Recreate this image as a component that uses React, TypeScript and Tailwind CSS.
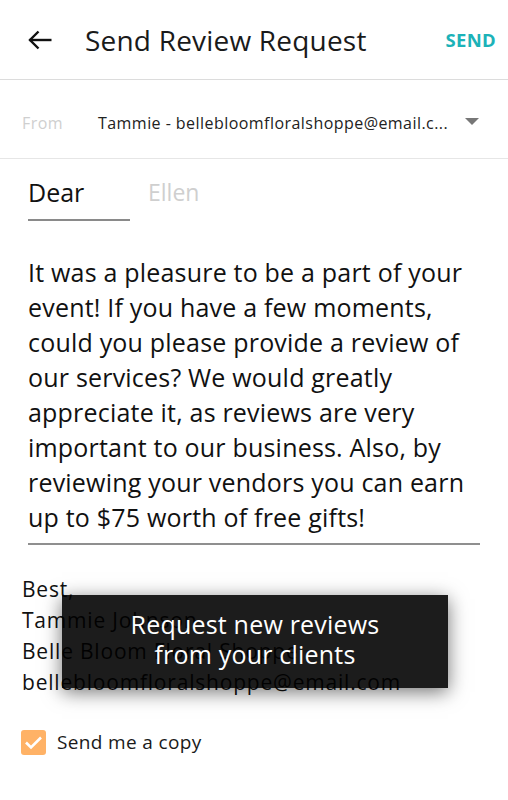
import React from "react";

export default function App() {
  return (
    <div
      className="relative w-[508px] h-[800px] bg-white overflow-hidden text-[#1a1a1a]"
      style={{ fontFamily: '"Open Sans", "Noto Sans", sans-serif' }}
    >
      {/* Header */}
      <div className="h-[80px] border-b border-[#dcdcdc] flex items-center">
        <div className="w-[85px] pl-[27px] flex items-center">
          <svg width="26" height="20" viewBox="0 0 26 20" fill="none">
            <path d="M2.5 10H24.5" stroke="#111" strokeWidth="2.4" />
            <path d="M11.5 1.5L3 10L11.5 18.5" stroke="#111" strokeWidth="2.4" />
          </svg>
        </div>
        <div className="text-[28px] leading-[36px] tracking-[0.2px] text-[#1a1a1a] mt-[1px]">Send Review Request</div>
        <div className="ml-auto pr-[12px] text-[18.5px] font-bold text-[#1cb2b8] tracking-[0.3px]">SEND</div>
      </div>

      {/* From row */}
      <div className="h-[79px] border-b border-[#e6e6e6] flex items-center pl-[22px] pr-[29px] pt-[8px]">
        <div className="w-[76px] text-[16px] tracking-[0.45px] text-[#cfcfcf]">From</div>
        <div className="text-[16px] tracking-[0.45px] text-[#222]">Tammie - bellebloomfloralshoppe@email.c...</div>
        <div className="ml-auto -mt-[4px]">
          <svg width="14" height="7" viewBox="0 0 14 7">
            <path d="M0 0H14L7 7Z" fill="#777" />
          </svg>
        </div>
      </div>

      {/* Dear row */}
      <div className="flex items-start pl-[28px] mt-[16px]">
        <div className="w-[102px] border-b-2 border-[#8a8a8a] pb-[10px] text-[25px] leading-[34px] text-[#111]">Dear</div>
        <div className="ml-[18px] text-[23px] leading-[34px] text-[#cfcfcf]">Ellen</div>
      </div>

      {/* Body */}
      <div className="mx-[28px] mt-[34px] pb-[8px] border-b-2 border-[#8f8f8f] text-[25px] leading-[35px] tracking-[0.2px] text-[#111]">
        It was a pleasure to be a part of your event! If you have a few moments, could you please provide a review of our services? We would greatly appreciate it, as reviews are very important to our business. Also, by reviewing your vendors you can earn up to $75 worth of free gifts!
      </div>

      {/* Signature */}
      <div className="pl-[22px] mt-[29px] text-[21px] leading-[31px] tracking-[0.8px] text-[#111]">
        <div>Best,</div>
        <div>Tammie Johnson</div>
        <div>Belle Bloom Floral Shoppe</div>
        <div>bellebloomfloralshoppe@email.com</div>
      </div>

      {/* Checkbox */}
      <div className="flex items-center pl-[21px] mt-[31px]">
        <div className="w-[25px] h-[25px] rounded-[3px] bg-[#ffb266] flex items-center justify-center">
          <svg width="19" height="15" viewBox="0 0 19 15" fill="none">
            <path d="M2 7.5L7 12.5L17 2.5" stroke="white" strokeWidth="2.6" />
          </svg>
        </div>
        <div className="ml-[11px] text-[19px] leading-[26px] tracking-[0.35px] text-[#1a1a1a]">Send me a copy</div>
      </div>

      {/* Toast */}
      <div className="absolute left-[62px] top-[595px] w-[386px] h-[93px] bg-black/[0.89] shadow-[0_4px_18px_rgba(0,0,0,0.55)] pt-[14px] text-center text-white text-[25px] leading-[30px] tracking-[0.2px]">
        <div>Request new reviews</div>
        <div>from your clients</div>
      </div>
    </div>
  );
}
